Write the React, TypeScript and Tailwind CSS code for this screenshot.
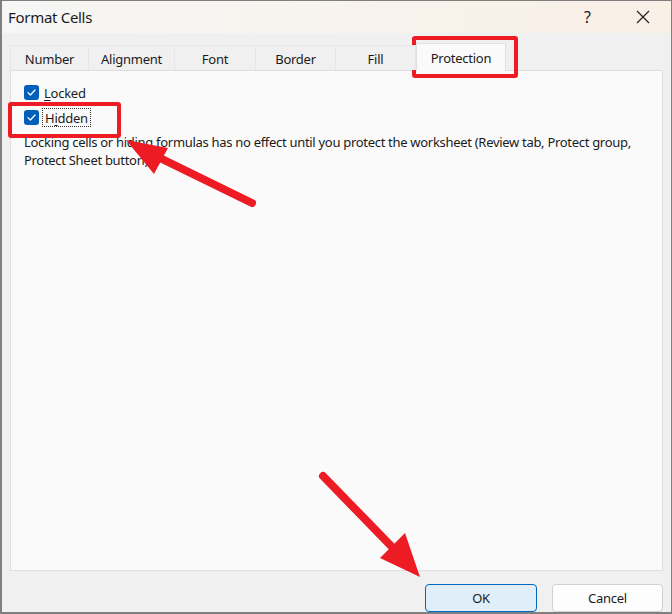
import React from "react";

const font = { fontFamily: '"Noto Sans", "Open Sans", sans-serif' };

function Check() {
  return (
    <span className="w-[15px] h-[15px] rounded-[3px] bg-[#005fb8] flex items-center justify-center shrink-0">
      <svg width="11" height="11" viewBox="0 0 11 11">
        <path d="M2 5.6 L4.4 8 L9 3" fill="none" stroke="#ffffff" strokeWidth="1.3" strokeLinecap="round" strokeLinejoin="round" />
      </svg>
    </span>
  );
}

const tabs = [
  { label: "Number", w: "w-[79px]" },
  { label: "Alignment", w: "w-[86px]" },
  { label: "Font", w: "w-[81px]" },
  { label: "Border", w: "w-[80px]" },
  { label: "Fill", w: "w-[80px]" },
];

export default function App() {
  return (
    <div
      className="relative w-[672px] h-[614px] flex flex-col bg-[#f0f0f0] border-t border-l-2 border-r border-b-2 border-[#7f7f7f] overflow-hidden text-[#1b1b1b]"
      style={font}
    >
      {/* Title bar */}
      <div className="h-[32px] shrink-0 flex items-center bg-linear-to-r from-[#f6f6f6] to-[#f9f0e6] pl-[6px]">
        <span className="text-[15px] leading-none tracking-[-0.3px]">Format Cells</span>
        <span className="ml-auto text-[16px] leading-none mr-[44px] text-[#222]">?</span>
        <svg width="16" height="16" viewBox="0 0 16 16" className="mr-[20px]">
          <path d="M2 2 L14 14 M14 2 L2 14" stroke="#222" strokeWidth="1.2" />
        </svg>
      </div>

      {/* Body */}
      <div className="flex-1 flex flex-col pl-[8px] pr-[8px] pt-[10px] text-[13px] tracking-[-0.25px]">
        {/* Tabs */}
        <div className="flex items-end h-[27px] relative z-10">
          {tabs.map((t, i) => (
            <div
              key={t.label}
              className={`${t.w} h-[25px] flex items-center justify-center pt-[3px] border-t border-[#e6e6e6] ${
                i === 0 ? "border-l" : ""
              } border-r bg-[#f0f0f0]`}
            >
              {t.label}
            </div>
          ))}
          <div className="w-[90px] h-[28px] -mb-px flex items-center justify-center pt-[2px] bg-[#fafafa] border-t border-l border-r border-[#e0e0e0]">
            Protection
          </div>
        </div>

        {/* Panel */}
        <div className="h-[501px] shrink-0 border border-[#dedede] bg-[#fafafa] pl-[13px] pt-[14px]">
          <div className="flex items-center gap-[5px] h-[15px]">
            <Check />
            <span className="leading-none pt-[2px]">
              <span className="underline underline-offset-2">L</span>ocked
            </span>
          </div>
          <div className="flex items-center gap-[3px] h-[15px] mt-[10px]">
            <Check />
            <span className="leading-none border border-dotted border-[#333] px-[2px] pt-[3px] pb-[1px]">
              H<span className="underline underline-offset-2">i</span>dden
            </span>
          </div>
          <p className="mt-[8px] leading-[18px] w-[630px] tracking-[-0.3px]">
            Locking cells or hiding formulas has no effect until you protect the worksheet (Review tab, Protect group,
            Protect Sheet button).
          </p>
        </div>

        {/* Buttons */}
        <div className="flex justify-end gap-[15px] mt-[13px] pr-0">
          <button className="w-[112px] h-[28px] pt-[2px] rounded-[4px] border border-[#0067c0] bg-[#e0eef9]">
            OK
          </button>
          <button className="w-[111px] h-[28px] pt-[2px] rounded-[4px] border border-[#d0d0d0] bg-[#fdfdfd]">
            Cancel
          </button>
        </div>
      </div>

      {/* Annotation overlays */}
      <div className="absolute left-[410px] top-[35px] w-[106px] h-[42px] border-[4px] border-[#ed1c24] rounded-[3px] pointer-events-none" />
      <div className="absolute left-[6px] top-[101px] w-[113px] h-[36px] border-[4px] border-[#ed1c24] rounded-[3px] pointer-events-none" />
      <svg className="absolute left-0 top-0 pointer-events-none" width="672" height="614" viewBox="0 0 672 614">
        <line x1="250" y1="202" x2="160" y2="158" stroke="#ed1c24" strokeWidth="8" strokeLinecap="round" />
        <polygon points="124,139 166,147 152,173" fill="#ed1c24" />
        <line x1="321" y1="475" x2="392" y2="548" stroke="#ed1c24" strokeWidth="8" strokeLinecap="round" />
        <polygon points="418,576 378,557 403,532" fill="#ed1c24" />
      </svg>
    </div>
  );
}
